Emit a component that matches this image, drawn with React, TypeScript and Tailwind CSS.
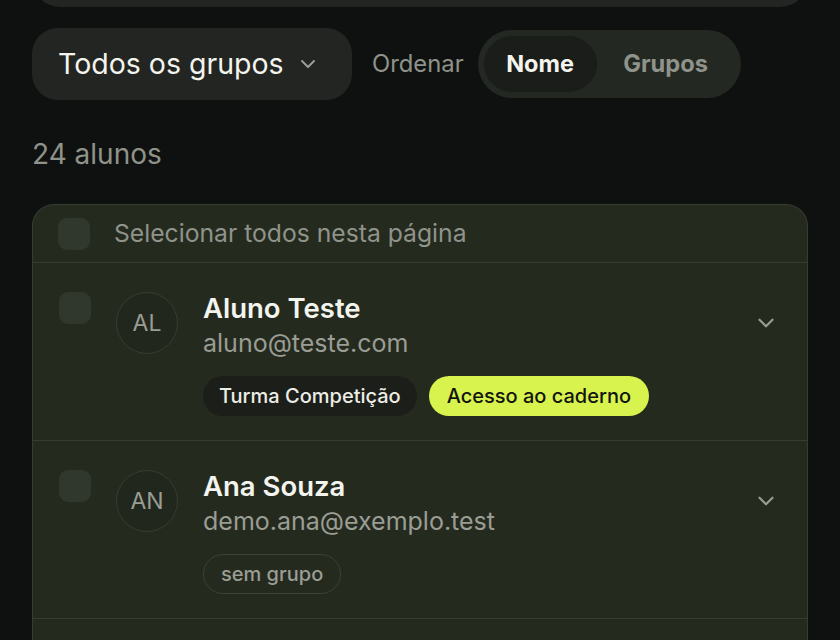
import React from "react";

const Chevron = ({ className }: { className?: string }) => (
  <svg className={className} viewBox="0 0 24 24" fill="none" stroke="currentColor" strokeWidth={2} strokeLinecap="round" strokeLinejoin="round">
    <path d="M6 9l6 6 6-6" />
  </svg>
);

type Student = { initials: string; name: string; email: string; tags: React.ReactNode };

const Row = ({ s }: { s: Student }) => (
  <div className="flex border-t border-[#363d31] pl-[26px] pr-[28px] pt-[29px] pb-[24px]">
    <div className="w-[32px] h-[32px] rounded-[9px] bg-[#30372c] shrink-0" />
    <div className="ml-[25px] w-[62px] h-[62px] rounded-full border border-[#373d33] bg-[#22271e] flex items-center justify-center text-[23px] text-[#9a9d94] shrink-0">
      {s.initials}
    </div>
    <div className="ml-[25px] flex-1 flex flex-col">
      <div className="text-[27.5px] leading-[34px] font-semibold text-[#f4f4ee] -mt-[1px]">{s.name}</div>
      <div className="text-[25px] leading-[34px] text-[#9a9d94] mt-[1px]">{s.email}</div>
      <div className="flex gap-[12px] mt-[16px]">{s.tags}</div>
    </div>
    <Chevron className="w-[26px] h-[26px] text-[#9a9d94] mt-[18px]" />
  </div>
);

export default function App() {
  const students: Student[] = [
    {
      initials: "AL",
      name: "Aluno Teste",
      email: "aluno@teste.com",
      tags: (
        <>
          <span className="h-[40px] px-[16px] rounded-full bg-[#1b1e19] text-[20px] font-medium text-[#ededE6] flex items-center">Turma Competição</span>
          <span className="h-[40px] px-[18px] rounded-full bg-[#d8f24e] text-[20px] font-medium text-[#12140f] flex items-center">Acesso ao caderno</span>
        </>
      ),
    },
    {
      initials: "AN",
      name: "Ana Souza",
      email: "demo.ana@exemplo.test",
      tags: (
        <span className="h-[40px] px-[17px] rounded-full border border-[#3a4135] text-[20px] font-medium text-[#9a9d94] flex items-center">sem grupo</span>
      ),
    },
  ];

  return (
    <div className="w-[840px] h-[640px] overflow-hidden bg-[#0f1110]" style={{ fontFamily: "Inter, 'Noto Sans', sans-serif" }}>
      <div className="px-[32px]">
        <div className="h-[7px] overflow-hidden flex flex-col justify-end">
          <div className="h-[56px] shrink-0 rounded-full bg-[#222521]" />
        </div>

        <div className="flex items-center mt-[21px]">
          <div className="h-[72px] w-[320px] rounded-[26px] bg-[#222521] flex items-center pl-[26px] pr-[32px]">
            <span className="text-[28.5px] text-[#f4f4ee] flex-1">Todos os grupos</span>
            <Chevron className="w-[24px] h-[24px] text-[#9a9d94]" />
          </div>
          <span className="ml-[20px] text-[23.8px] text-[#8f938a]">Ordenar</span>
          <div className="ml-[14px] h-[68px] rounded-full bg-[#232822] p-[6px] flex items-center">
            <div className="h-[56px] w-[113px] rounded-full bg-[#1a1d1a] flex items-center justify-center text-[23.5px] font-bold text-[#f4f4ee]">Nome</div>
            <div className="h-[56px] w-[138px] flex items-center justify-center text-[23.7px] font-bold text-[#8f938a]">Grupos</div>
          </div>
        </div>

        <div className="mt-[37px] text-[28px] leading-[34px] text-[#8f938a]">24 alunos</div>

        <div className="mt-[33px] rounded-t-[22px] border border-b-0 border-[#363d31] bg-[#252a1f]">
          <div className="h-[57px] flex items-center pl-[25px]">
            <div className="w-[32px] h-[32px] rounded-[9px] bg-[#30372c]" />
            <span className="ml-[24px] text-[24.7px] text-[#8f938a]">Selecionar todos nesta página</span>
          </div>
          {students.map((s) => (
            <Row key={s.name} s={s} />
          ))}
          <div className="border-t border-[#363d31] h-[40px]" />
        </div>
      </div>
    </div>
  );
}
